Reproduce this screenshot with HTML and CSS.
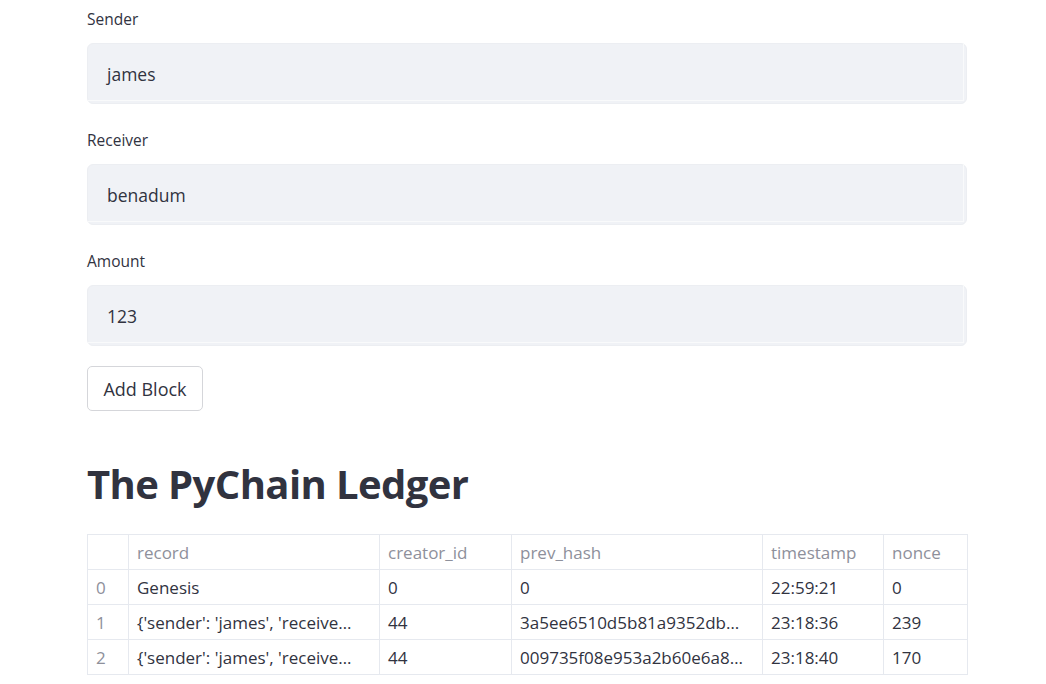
FILE: index.html
```html
<!DOCTYPE html>
<html>
<head>
<meta charset="utf-8">
<link rel="stylesheet" href="styles.css">
</head>
<body>
<main class="main">
  <div class="field">
    <label class="label">Sender</label>
    <div class="input"><div class="input-inner">james</div></div>
  </div>
  <div class="field">
    <label class="label">Receiver</label>
    <div class="input"><div class="input-inner">benadum</div></div>
  </div>
  <div class="field">
    <label class="label">Amount</label>
    <div class="input"><div class="input-inner">123</div></div>
  </div>
  <button class="btn">Add Block</button>
  <h1 class="title">The PyChain Ledger</h1>
  <table class="grid">
    <colgroup>
      <col style="width:41px"><col style="width:251px"><col style="width:132px"><col style="width:251px"><col style="width:121px"><col style="width:84px">
    </colgroup>
    <thead>
      <tr><th></th><th>record</th><th>creator_id</th><th>prev_hash</th><th>timestamp</th><th>nonce</th></tr>
    </thead>
    <tbody>
      <tr><td class="idx">0</td><td>Genesis</td><td>0</td><td>0</td><td>22:59:21</td><td>0</td></tr>
      <tr><td class="idx">1</td><td>{'sender': 'james', 'receive…</td><td>44</td><td>3a5ee6510d5b81a9352db…</td><td>23:18:36</td><td>239</td></tr>
      <tr><td class="idx">2</td><td>{'sender': 'james', 'receive…</td><td>44</td><td>009735f08e953a2b60e6a8…</td><td>23:18:40</td><td>170</td></tr>
    </tbody>
  </table>
</main>
</body>
</html>
```
FILE: styles.css
```css
html, body {
  margin: 0;
  padding: 0;
  background: #ffffff;
}
body {
  font-family: "Open Sans", "Noto Sans", sans-serif;
  color: #31333f;
}
.main {
  width: 880px;
  margin-left: 87px;
  padding-top: 7px;
  display: flex;
  flex-direction: column;
  align-items: flex-start;
}
.field {
  width: 100%;
  display: flex;
  flex-direction: column;
  margin-bottom: 24px;
}
.label {
  height: 24px;
  line-height: 24px;
  font-size: 15.5px;
  color: #31333f;
  margin-bottom: 12px;
}
.input {
  height: 61px;
  box-sizing: border-box;
  background: #f0f2f6;
  border: 1px solid #eceef2;
  border-radius: 6px;
  padding: 0 2px 2px 0;
  display: flex;
}
.input-inner {
  flex: 1;
  display: flex;
  align-items: center;
  padding-left: 19px;
  padding-top: 3px;
  font-size: 17.5px;
  color: #31333f;
  border-right: 1px solid #f9fafb;
  border-bottom: 1px solid #f9fafb;
  border-radius: 5px 0 0 0;
}
.btn {
  margin-top: -4px;
  width: 116px;
  height: 45px;
  background: #ffffff;
  border: 1px solid #d5d6da;
  border-radius: 5px;
  font-family: inherit;
  font-size: 18px;
  color: #31333f;
  padding: 0;
}
.title {
  margin: 34px 0 12px 0;
  height: 77px;
  line-height: 77px;
  font-size: 40px;
  font-weight: 700;
  color: #31333f;
  letter-spacing: -0.6px;
}
.grid {
  width: 880px;
  border-collapse: collapse;
  table-layout: fixed;
  font-size: 17px;
}
.grid th, .grid td {
  height: 35px;
  box-sizing: border-box;
  border: 1px solid #e6e9ef;
  padding: 0 8px;
  text-align: left;
  white-space: nowrap;
  overflow: hidden;
}
.grid th {
  font-weight: 400;
  color: #8e909b;
}
.grid td {
  color: #31333f;
}
.grid td.idx {
  color: #8e909b;
}
```
